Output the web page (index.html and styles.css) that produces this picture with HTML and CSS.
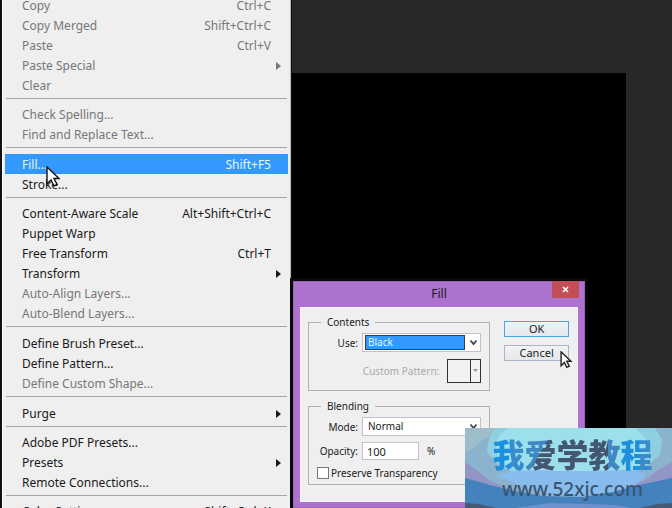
FILE: index.html
```html
<!DOCTYPE html>
<html lang="en">
<head>
<meta charset="utf-8">
<title>Edit menu and Fill dialog</title>
<link rel="stylesheet" href="styles.css">
</head>
<body>
<main class="workspace">
  <div class="canvas"></div>

  <nav class="menu" aria-label="Edit">
    <button class="item" disabled><span>Copy</span><kbd>Ctrl+C</kbd></button>
    <button class="item" disabled><span>Copy Merged</span><kbd>Shift+Ctrl+C</kbd></button>
    <button class="item" disabled><span>Paste</span><kbd>Ctrl+V</kbd></button>
    <button class="item sub" disabled><span>Paste Special</span></button>
    <button class="item" disabled><span>Clear</span></button>
    <hr>
    <button class="item" disabled><span>Check Spelling...</span></button>
    <button class="item" disabled><span>Find and Replace Text...</span></button>
    <hr class="wide">
    <button class="item active"><span>Fill...</span><kbd>Shift+F5</kbd></button>
    <button class="item"><span>Stroke...</span></button>
    <hr>
    <button class="item"><span>Content-Aware Scale</span><kbd>Alt+Shift+Ctrl+C</kbd></button>
    <button class="item"><span>Puppet Warp</span></button>
    <button class="item"><span>Free Transform</span><kbd>Ctrl+T</kbd></button>
    <button class="item sub"><span>Transform</span></button>
    <button class="item" disabled><span>Auto-Align Layers...</span></button>
    <button class="item" disabled><span>Auto-Blend Layers...</span></button>
    <hr class="wide">
    <button class="item"><span>Define Brush Preset...</span></button>
    <button class="item"><span>Define Pattern...</span></button>
    <button class="item" disabled><span>Define Custom Shape...</span></button>
    <hr class="wide">
    <button class="item sub"><span>Purge</span></button>
    <hr>
    <button class="item"><span>Adobe PDF Presets...</span></button>
    <button class="item sub"><span>Presets</span></button>
    <button class="item"><span>Remote Connections...</span></button>
    <hr>
    <button class="item"><span>Color Settings...</span><kbd>Shift+Ctrl+K</kbd></button>
  </nav>

  <section class="dialog" role="dialog" aria-labelledby="dialog-title">
    <header class="titlebar">
      <h1 id="dialog-title">Fill</h1>
      <button class="close" aria-label="Close">
        <svg width="7" height="7" viewBox="0 0 7 7"><path d="M1 1l5 5M6 1l-5 5" stroke="#fff" stroke-width="1.6"/></svg>
      </button>
    </header>
    <div class="body">
      <div class="groups">
        <fieldset class="contents">
          <legend>Contents</legend>
          <div class="row">
            <label for="use">Use:</label>
            <span class="combo chosen">
              <select id="use"><option>Black</option></select>
              <svg width="9" height="7" viewBox="0 0 9 7"><path d="M1.5 1.5l3 3.5 3-3.5" fill="none" stroke="#444" stroke-width="1.8"/></svg>
            </span>
          </div>
          <div class="row pattern">
            <span class="dim" id="pattern-label">Custom Pattern:</span>
            <button class="swatch" aria-labelledby="pattern-label" disabled>
              <svg width="5" height="4" viewBox="0 0 5 4"><path d="M0 0h5L2.500 3z" fill="#999"/></svg>
            </button>
          </div>
        </fieldset>
        <fieldset class="blending">
          <legend>Blending</legend>
          <div class="row">
            <label for="mode">Mode:</label>
            <span class="combo">
              <select id="mode"><option>Normal</option></select>
              <svg width="9" height="7" viewBox="0 0 9 7"><path d="M1.5 1.5l3 3.5 3-3.5" fill="none" stroke="#444" stroke-width="1.8"/></svg>
            </span>
          </div>
          <div class="row">
            <label for="opacity">Opacity:</label>
            <input class="number" id="opacity" type="text" value="100">
            <span>%</span>
          </div>
          <div class="check">
            <input id="preserve" type="checkbox">
            <label for="preserve">Preserve Transparency</label>
          </div>
        </fieldset>
      </div>
      <div class="actions">
        <button class="push default">OK</button>
        <button class="push">Cancel</button>
      </div>
    </div>
  </section>

  <svg class="pointer on-fill" width="14" height="22" viewBox="0 0 14 22"><path d="M1 1v17l4-4 3 6 3-1.500-3-6h5z" fill="#fff" stroke="#111" stroke-width="1.4"/></svg>
  <svg class="pointer on-cancel" width="12" height="18" viewBox="0 0 14 22"><path d="M1 1v17l4-4 3 6 3-1.500-3-6h5z" fill="#fff" stroke="#222" stroke-width="1.7"/></svg>

  <aside class="watermark" lang="zh-CN">
    <svg class="backdrop" viewBox="0 0 207 80" preserveAspectRatio="none" aria-hidden="true">
      <path fill="#8cb3cd" d="M0 0h207v80H0z"/>
      <path fill="#9dbdcb" d="M0 0h40L22 9 8 20 0 25z"/>
      <path fill="#8fcfe1" d="M30 0h160l7 12-2 15-12 10-17 8H50L33 37 22 24l2-14z"/>
      <path fill="#9ce0eb" d="M42 0h128l10 10 4 14-7 12-19 9-28 4H76l-24-5-16-10-6-12 3-13z"/>
      <path fill="#9196c6" d="M0 34l13 9 13 10 15 7-11 1L0 51zM207 34l-14 8-13 10-19 8 17 1 29-10z"/>
      <path fill="#4482be" d="M0 50l25 7 25 6 28 5 40 1 33-6 28-7 28-6v30H0z"/>
      <path fill="#87bced" d="M30 47l20-4 28-1 12 1h36l40-1 16 4-11 10-23 8-38 4-34-4-24-8z"/>
      <path fill="#6b91ce" d="M57 79l28-4 36 1 28 1 17 3H50z"/>
      <path fill="#465b73" d="M0 75l14 1 17 4H0zM207 75l-15 1-17 4h32z"/>
    </svg>
    <strong class="brand"><span class="azure">我</span><span class="mix">爱</span><span class="slate">学</span><span class="fade">教</span><span class="azure">程</span></strong>
    <span class="site">www.52xjc.com</span>
  </aside>
</main>
</body>
</html>
```
FILE: styles.css
```css
* { box-sizing: border-box; }

body {
  margin: 0;
  background: #282828;
  color: #1a1a1a;
  font: 12px/20px "Noto Sans", "Open Sans", sans-serif;
}

button, input, select { font: inherit; color: inherit; }

.workspace {
  position: relative;
  display: flex;
  height: 100vh;
  padding: 73px 46px 0 0;
  overflow: hidden;
}

.canvas { flex: 1; background: #000; }

/* Menu */
.menu {
  position: absolute;
  top: -5px;
  left: 0;
  width: 292px;
  padding: 0 3px;
  background: #efefef;
  border: solid #111;
  border-width: 0 1px 0 2px;
  box-shadow: inset 1px 0 #fff, inset -1px 0 #b5b5b5;
}

.item {
  display: flex;
  justify-content: space-between;
  align-items: center;
  width: 100%;
  height: 20px;
  padding: 1px 17px 0;
  border: 0;
  background: none;
  text-align: left;
  white-space: nowrap;
}

.item kbd { font: inherit; }
.item:disabled { color: #777; }
.item.active { background: #3399fe; color: #e9f4ff; }

.item.sub { padding-right: 7px; }
.item.sub::after {
  content: "";
  border: solid transparent;
  border-width: 4px 0 4px 5px;
  border-left-color: currentColor;
}

.menu hr {
  height: 9px;
  margin: 0 1px;
  border: 0;
  background: linear-gradient(#a5a5a5, #a5a5a5) 0 3px / 100% 1px no-repeat;
}
.menu hr.wide { height: 10px; }

/* Dialog */
.dialog {
  position: absolute;
  top: 281px;
  left: 293px;
  width: 292px;
  padding: 0 7px 6px;
  background: #ad72cd;
  box-shadow: 0 0 0 3px #080808, inset 0 0 0 1px #9c62bd;
  font-size: 10px;
  line-height: 14px;
}

.titlebar {
  position: relative;
  height: 26px;
  text-align: center;
}
.titlebar h1 {
  margin: 0;
  font-size: 12px;
  font-weight: 400;
  line-height: 26px;
}

.close {
  position: absolute;
  top: 0;
  right: -1px;
  display: grid;
  place-items: center;
  width: 27px;
  height: 17px;
  padding: 0;
  border: 0;
  background: #c24f56;
}

.body {
  display: flex;
  gap: 14px;
  height: 195px;
  padding: 7px 8px 0 7px;
  background: #efefef;
  border: 1px solid #fbf3ff;
}

.groups { width: 183px; }

fieldset {
  display: flex;
  flex-direction: column;
  min-width: 0;
  margin: 0 0 8px;
  padding: 0 8px;
  border: 1px solid #b0b0b0;
}
.contents { height: 76px; }
.blending { height: 86px; }

legend { margin-left: 4px; padding: 0 6px; }

.row {
  display: flex;
  align-items: center;
  gap: 4px;
  margin-bottom: 6px;
}
.row > label {
  width: 49px;
  margin-left: -8px;
  text-align: right;
}
.contents .row:first-of-type { margin: 4px 0 7px; }
.blending .row:first-of-type { margin-top: 4px; }

.combo {
  display: flex;
  flex: 1;
  align-items: center;
  gap: 4px;
  height: 19px;
  padding: 2px;
  border: 1px solid #c8bdd0;
  background: #fff;
}
.combo select {
  appearance: none;
  flex: 1;
  height: 15px;
  padding: 0 2px;
  border: 1px solid transparent;
  background: none;
  line-height: 13px;
}
.chosen select {
  border-color: #573a25;
  background: #3399fe;
  color: #e9f4ff;
}

.pattern { justify-content: flex-end; gap: 8px; margin: 0; }
.dim { color: #aaa; }
.swatch {
  display: flex;
  justify-content: flex-end;
  align-items: center;
  width: 34px;
  height: 24px;
  padding: 0 2px;
  border: 1px solid #333;
  background: linear-gradient(#333, #333) 22px 0 / 1px 100% no-repeat #f2f2f2;
}

.number {
  width: 57px;
  height: 18px;
  margin-right: 4px;
  padding: 0 4px;
  border: 1px solid #c8bdd0;
  background: #fff;
  font-size: 11px;
}

.check { display: flex; align-items: center; gap: 2px; }
.check input {
  appearance: none;
  width: 12px;
  height: 12px;
  margin: 0;
  border: 1px solid #777;
  background: #fff;
}

.actions {
  display: flex;
  flex-direction: column;
  gap: 8px;
  width: 65px;
  padding-top: 6px;
}
.push {
  height: 16px;
  padding: 0;
  border: 1px solid #a9b6c6;
  background: linear-gradient(#f3f3f3, #e5e7ec);
  font-size: 11px;
  line-height: 14px;
}
.push.default { border-color: #48a5e6; }

/* Mouse pointers */
.pointer { position: absolute; }
.on-fill { top: 166px; left: 46px; }
.on-cancel { top: 351px; left: 560px; }

/* Watermark */
.watermark {
  position: absolute;
  right: 0;
  bottom: 0;
  display: flex;
  flex-direction: column;
  align-items: center;
  width: 207px;
  height: 80px;
  padding: 6px 0 0 8px;
}
.backdrop {
  position: absolute;
  inset: 0;
  width: 100%;
  height: 100%;
}
.brand, .site { position: relative; }
.brand {
  font: 900 32px/38px "Noto Sans CJK SC", sans-serif;
  white-space: nowrap;
}
.brand span { background-clip: text; color: transparent; }
.azure { background-image: linear-gradient(90deg, #1d8fdc 60%, #388cce 60%); }
.mix { background-image: linear-gradient(120deg, #3f86c5 50%, #435770 50%); }
.slate { background-image: linear-gradient(#435770, #435770); }
.fade { background-image: linear-gradient(90deg, #435770 60%, #4286c4 60%); }
.site {
  color: #3a5474;
  font: 500 19px/34px "Noto Sans", sans-serif;
}
```
